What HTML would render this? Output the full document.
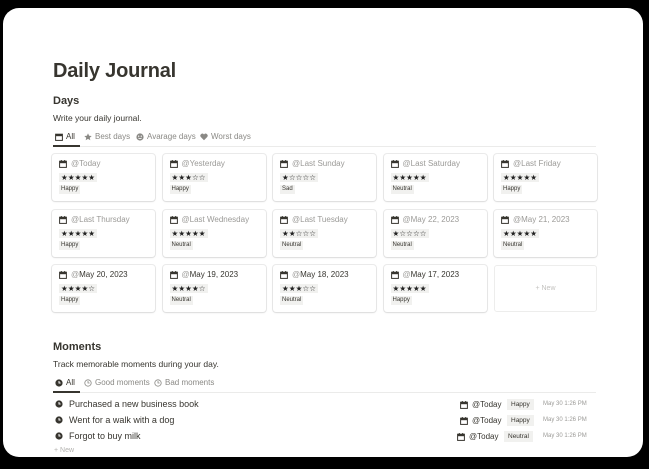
<!DOCTYPE html>
<html><head><meta charset="utf-8"><style>
*{margin:0;padding:0;box-sizing:border-box}
html,body{background:#000}
body{width:649px;height:469px;font-family:"Liberation Sans",sans-serif;color:#37352f;position:relative;overflow:hidden}
.page{position:absolute;left:3px;top:8px;width:640px;height:449px;background:#fff;border-radius:16px}
.a{position:absolute;white-space:nowrap}
h1{position:absolute;left:53px;top:60px;font-size:20px;font-weight:700;letter-spacing:-0.2px}
.h2{font-size:11px;font-weight:600}
.d{font-size:8.5px}
.tab{font-size:8px;color:#8a8985;display:flex;align-items:center;gap:3px}
.tab.on{color:#37352f}
.line{position:absolute;height:1px;background:#ebebea}
.ul{position:absolute;height:2px;background:#37352f}
.card{position:absolute;width:103px;height:47px;border-radius:3px;box-shadow:0 0 0 1px rgba(15,15,15,.08),0 1px 2px rgba(15,15,15,.08);background:#fff}
.card .dt{position:absolute;left:7px;top:5px;font-size:8px;color:#9b9a97;display:flex;align-items:center;gap:4px}
.card .dt b{font-weight:400;color:#37352f}
.card .st{position:absolute;left:7px;top:19px;font-size:7.5px;background:#f1f1ef;padding:0 2px;letter-spacing:0.1px;line-height:9px;color:#222}
.card .tg{position:absolute;left:7px;top:31px;font-size:6px;background:#f1f1ef;padding:1px 2px;line-height:7px;color:#37352f}
.new{position:absolute;width:103px;height:47px;border-radius:3px;border:1px solid #ededec;font-size:7px;color:#c3c2bf;display:flex;align-items:center;justify-content:center}
.row{font-size:9px;display:flex;align-items:center;gap:6px}
.rt{font-size:8px;display:flex;align-items:center;gap:4px}
.pill{font-size:6.5px;background:#f1f1ef;padding:2px 4px;color:#37352f}
.tm{font-size:6px;color:#9b9a97}
</style></head><body>
<div class="page"></div>
<h1>Daily Journal</h1>
<div class="a h2" style="left:53px;top:95px">Days</div>
<div class="a d" style="left:53px;top:113px">Write your daily journal.</div>

<div class="a tab on" style="left:55px;top:132px"><svg width="8" height="8" viewBox="0 0 8 8"><rect x="0.6" y="1.2" width="6.8" height="6.2" fill="none" stroke="#37352f" stroke-width="1"/><rect x="0.6" y="1.2" width="6.8" height="2" fill="#37352f"/></svg>All</div>
<div class="a tab" style="left:84px;top:132px"><svg width="8" height="8" viewBox="0 0 10 10"><path d="M5 0.5l1.4 3 3.2.3-2.4 2.1.7 3.2L5 7.4 2.1 9.1l.7-3.2L.4 3.8l3.2-.3z" fill="#8a8985"/></svg>Best days</div>
<div class="a tab" style="left:136px;top:132px"><svg width="8" height="8" viewBox="0 0 10 10"><circle cx="5" cy="5" r="4.5" fill="#8a8985"/><circle cx="3.4" cy="4" r=".8" fill="#fff"/><circle cx="6.6" cy="4" r=".8" fill="#fff"/><path d="M3 6.2q2 1.8 4 0" stroke="#fff" fill="none"/></svg>Avarage days</div>
<div class="a tab" style="left:200px;top:132px"><svg width="8" height="8" viewBox="0 0 10 10"><path d="M5 9L1 5A2.4 2.4 0 015 1.8 2.4 2.4 0 019 5z" fill="#8a8985"/></svg>Worst days</div>
<div class="line" style="left:53px;top:146px;width:543px"></div>
<div class="ul" style="left:53px;top:145px;width:27px"></div>

<div id="cards"></div>

<div class="a h2" style="left:53px;top:341px">Moments</div>
<div class="a d" style="left:53px;top:359px">Track memorable moments during your day.</div>
<div class="a tab on" style="left:55px;top:378px"><svg width="8" height="8" viewBox="0 0 10 10"><circle cx="5" cy="5" r="4.5" fill="#37352f"/><path d="M5 2.5V5h2" stroke="#fff" fill="none" stroke-width="1.2"/></svg>All</div>
<div class="a tab" style="left:84px;top:378px"><svg width="8" height="8" viewBox="0 0 10 10"><circle cx="5" cy="5" r="4" fill="none" stroke="#8a8985"/><path d="M5 2.5V5h2" stroke="#8a8985" fill="none"/></svg>Good moments</div>
<div class="a tab" style="left:154px;top:378px"><svg width="8" height="8" viewBox="0 0 10 10"><circle cx="5" cy="5" r="4" fill="none" stroke="#8a8985"/><path d="M5 2.5V5h2" stroke="#8a8985" fill="none"/></svg>Bad moments</div>
<div class="line" style="left:53px;top:392px;width:543px"></div>
<div class="ul" style="left:53px;top:391px;width:27px"></div>

<div id="rows"></div>
<div class="a" style="left:54px;top:447px;font-size:7px;color:#b4b3b0">+ New</div>

<script>
var cal='<svg width="8" height="8" viewBox="0 0 8 8"><rect x="0.6" y="1.2" width="6.8" height="6.2" fill="none" stroke="#37352f" stroke-width="1"/><rect x="0.6" y="1.2" width="6.8" height="2" fill="#37352f"/><rect x="1.8" y="0" width="1" height="1.5" fill="#37352f"/><rect x="5.2" y="0" width="1" height="1.5" fill="#37352f"/></svg>';
var d=[["Today",5,"Happy"],["Yesterday",3,"Happy"],["Last Sunday",1,"Sad"],["Last Saturday",5,"Neutral"],["Last Friday",5,"Happy"],
["Last Thursday",5,"Happy"],["Last Wednesday",5,"Neutral"],["Last Tuesday",2,"Neutral"],["May 22, 2023",1,"Neutral"],["May 21, 2023",5,"Neutral"],
["May 20, 2023",4,"Happy"],["May 19, 2023",4,"Neutral"],["May 18, 2023",3,"Neutral"],["May 17, 2023",5,"Happy"]];
var h="",xs=[52,162.5,273,383.5,494],ys=[154,210,265];
d.forEach(function(c,i){var x=xs[i%5],y=ys[Math.floor(i/5)];
var s="★".repeat(c[1])+"☆".repeat(5-c[1]);
h+='<div class="card" style="left:'+x+'px;top:'+y+'px"><div class="dt">'+cal+'<span>@<b style="color:'+(i<10?'#9b9a97':'#37352f')+'">'+c[0]+'</b></span></div><div class="st">'+s+'</div><div class="tg">'+c[2]+'</div></div>';});
h+='<div class="new" style="left:494px;top:265px">+ New</div>';
document.getElementById("cards").innerHTML=h;
var clk='<svg width="8" height="8" viewBox="0 0 10 10"><circle cx="5" cy="5" r="4.5" fill="#37352f"/><path d="M5 2.5V5h2" stroke="#fff" fill="none" stroke-width="1.2"/></svg>';
var r=[["Purchased a new business book","Happy",460],["Went for a walk with a dog","Happy",460],["Forgot to buy milk","Neutral",457]],g="";
r.forEach(function(o,i){var y=399+i*16;
g+='<div class="a row" style="left:55px;top:'+y+'px">'+clk+'<span>'+o[0]+'</span></div>';
g+='<div class="a rt" style="left:'+o[2]+'px;top:'+(y+1)+'px">'+cal+'<span>@Today</span></div>';
g+='<div class="a pill" style="left:'+(o[1]=="Happy"?507:504)+'px;top:'+(y)+'px">'+o[1]+'</div>';
g+='<div class="a tm" style="left:543px;top:'+(y+2)+'px">May 30 1:26 PM</div>';});
document.getElementById("rows").innerHTML=g;
</script>
</body></html>
